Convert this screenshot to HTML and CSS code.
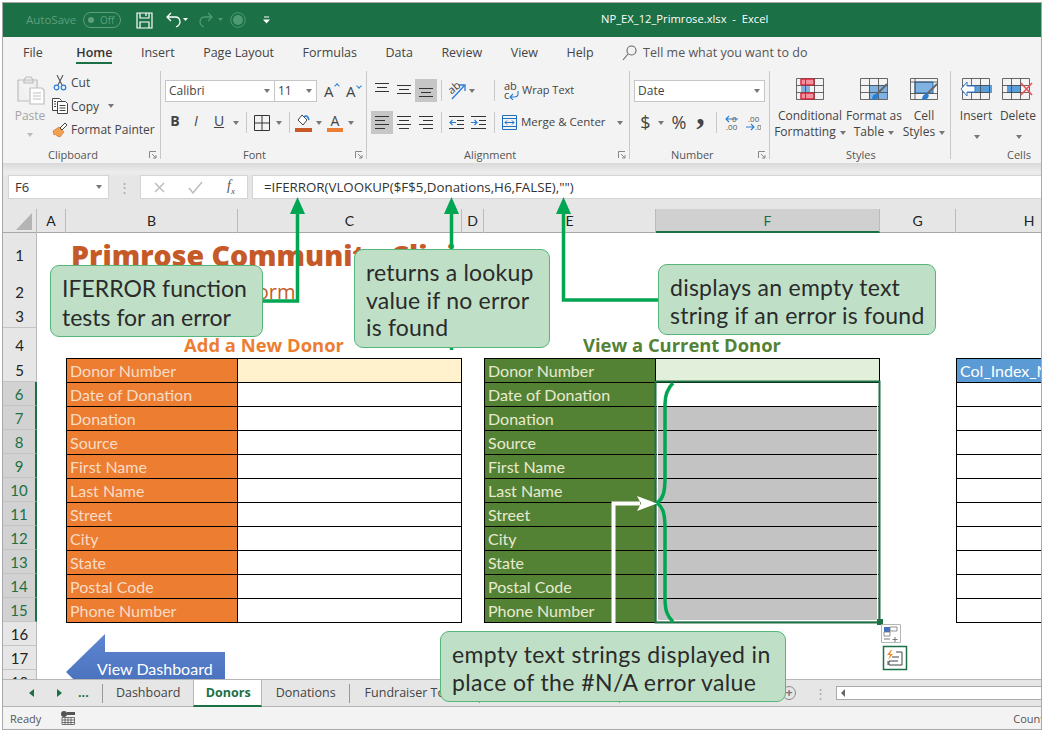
FILE: index.html
```html
<!DOCTYPE html>
<html>
    <head>
        <title>NP_EX_12_Primrose.xlsx - Excel</title>
        <meta charset="UTF-8">
        <link rel="stylesheet" href="styles.css">
    </head>
    <body>
        <div id="window">
            <div id="titlebar">
                <div id="qat">
                    <span id="autosave">AutoSave</span>
                    <span id="toggle"><i></i>Off</span>
                    <svg class="qat_save" width="17" height="17" viewBox="0 0 17 17" fill="none" stroke="#fff" stroke-width="1.2"><path d="M1 1h15v15H1zM4 1v5h9V1M4 16v-6h9v6M10 1v3"/></svg>
                    <svg class="qat_undo" width="22" height="16" viewBox="0 0 22 16" fill="none"><path d="M5 1L1 5l4 4M1 5h8c4 0 5 2 5 5s-2 4-4 5" stroke="#fff" stroke-width="1.3"/><path d="M17 6h5l-2.5 3z" fill="#fff"/></svg>
                    <svg class="qat_redo" width="26" height="16" viewBox="0 0 26 16" fill="none"><path d="M10 1l4 4-4 4M14 5H7c-4 0-5 2-5 5s2 4 4 5" stroke="#4e9b72" stroke-width="1.3"/><path d="M20 6h5l-2.5 3z" fill="#4e9b72"/></svg>
                    <svg class="qat_touch" width="16" height="16" viewBox="0 0 16 16"><circle cx="8" cy="8" r="7.3" fill="none" stroke="#4e9b72"/><circle cx="8" cy="8" r="5" fill="#4e9b72"/></svg>
                    <svg class="qat_more" width="7" height="8" viewBox="0 0 7 8"><path d="M1 1h5" stroke="#fff"/><path d="M0 3.500h7L3.500 7.500z" fill="#fff"/></svg>
                </div>
                <div id="doc_title">NP_EX_12_Primrose.xlsx &nbsp;-&nbsp; Excel</div>
            </div>

            <div id="tabs">
                <span>File</span>
                <span class="tab_active">Home</span>
                <span>Insert</span>
                <span>Page Layout</span>
                <span>Formulas</span>
                <span>Data</span>
                <span>Review</span>
                <span>View</span>
                <span>Help</span>
                <span class="tell_me">
                    <svg width="15" height="16" viewBox="0 0 15 16" fill="none" stroke="#666" stroke-width="1.100"><circle cx="9.500" cy="5.500" r="4.500"/><path d="M6 9l-5 6"/></svg>
                    Tell me what you want to do
                </span>
            </div>

            <div id="ribbon">
                <div class="group g_clip">
                    <div class="group_body clip_body">
                        <div class="paste">
                            <svg width="30" height="30" viewBox="0 0 30 30" fill="none" stroke="#bdbdbd" stroke-width="1.200"><path d="M3 5h6l2-3h5l2 3h4v8M3 5v21h11" fill="#f0f0f0"/><path d="M9 5h9v3H9z" fill="#e6e6e6"/><path d="M15 13h12l2 2v14H15z" fill="#fff"/><path d="M18 18h8M18 21h8M18 24h8"/></svg>
                            <span class="paste_text">Paste</span>
                            <i class="caret faded"></i>
                        </div>
                        <div class="clip_col">
                            <div class="clip_row">
                                <svg width="16" height="16" viewBox="0 0 16 16" fill="none"><path d="M5 0l5 10M11 0L6 10" stroke="#555" stroke-width="1.100"/><circle cx="4.500" cy="12.500" r="2.300" stroke="#2b7cd3" stroke-width="1.200"/><circle cx="11.500" cy="12.500" r="2.300" stroke="#2b7cd3" stroke-width="1.200"/></svg>
                                <span>Cut</span>
                            </div>
                            <div class="clip_row">
                                <svg width="16" height="16" viewBox="0 0 16 16" fill="#fff" stroke="#444"><path d="M.5.500h7l2 2v10h-9z"/><path d="M5.500 3.500h8l2 2v10h-10z"/><path d="M7.500 7.500h6M7.500 10h6M7.500 12.500h6M2 3.500h2M2 6h2M2 8.500h2" fill="none"/></svg>
                                <span>Copy</span>
                                <i class="caret copy_caret"></i>
                            </div>
                            <div class="clip_row">
                                <svg width="16" height="16" viewBox="0 0 16 16"><path d="M1 9l6-4 5 5-4 5-3-1-1-2-2 1z" fill="#f0a050" stroke="#d06a20" stroke-width=".6"/><path d="M8 6l5-5 2 2-5 5z" fill="#fff" stroke="#444"/></svg>
                                <span>Format Painter</span>
                            </div>
                        </div>
                    </div>
                    <div class="group_label label_clip"><span>Clipboard</span><svg class="launch" width="8" height="8" viewBox="0 0 8 8" fill="none" stroke="#888"><path d="M.5 7V.5H7M3 3l4 4M7 4v3H4"/></svg></div>
                </div>

                <div class="group g_font">
                    <div class="group_body tools_body">
                        <div class="tool_row first_row">
                            <div class="select font_name"><span>Calibri</span><i class="caret"></i></div>
                            <div class="select font_size"><span>11</span><i class="caret"></i></div>
                            <span class="grow_a">A<i class="up_mark"></i></span>
                            <span class="grow_a">A<i class="down_mark"></i></span>
                        </div>
                        <div class="tool_row">
                            <span class="t w20 bold">B</span>
                            <span class="t w22 ital">I</span>
                            <span class="t w24 under">U</span>
                            <span class="t w10"><i class="caret"></i></span>
                            <span class="t w10"><i class="sep"></i></span>
                            <span class="t w21">
                                <svg width="16" height="16" viewBox="0 0 16 16" fill="none" stroke="#333"><path d="M.5.500h15v15H.5zM8 .5v15M.5 8h15"/></svg>
                            </span>
                            <span class="t w13"><i class="caret"></i></span>
                            <span class="t w8"><i class="sep"></i></span>
                            <span class="t w20">
                                <svg width="17" height="18" viewBox="0 0 17 18"><path d="M7 1l5 5-4 5-5-5z" fill="#fff" stroke="#444"/><path d="M9 3c2-2 4-1 5 3" fill="none" stroke="#2b7cd3" stroke-width="1.500"/><path d="M0 14h17v4H0z" fill="#c55a28"/></svg>
                            </span>
                            <span class="t w11"><i class="caret"></i></span>
                            <span class="t w22 font_color">A</span>
                            <span class="t w10"><i class="caret"></i></span>
                        </div>
                    </div>
                    <div class="group_label label_font"><span>Font</span><svg class="launch" width="8" height="8" viewBox="0 0 8 8" fill="none" stroke="#888"><path d="M.5 7V.5H7M3 3l4 4M7 4v3H4"/></svg></div>
                </div>

                <div class="group g_align">
                    <div class="group_body tools_body">
                        <div class="tool_row first_row">
                            <span class="t w22"><svg width="14" height="23" viewBox="0 0 14 23" stroke="#333"><path d="M0 4.500h14M2 8.500h10M0 12.500h14"/></svg></span>
                            <span class="t w22"><svg width="14" height="23" viewBox="0 0 14 23" stroke="#333"><path d="M0 6.500h14M2 10.500h10M0 14.500h14"/></svg></span>
                            <span class="t w22 on"><svg width="14" height="23" viewBox="0 0 14 23" stroke="#333"><path d="M0 9.500h14M2 13.500h10M0 17.500h14"/></svg></span>
                            <span class="t w8"><i class="sep"></i></span>
                            <span class="t w44 orient">
                                <svg width="17" height="20" viewBox="0 0 17 20" fill="none"><text x="0" y="11" transform="rotate(-40 5 9)" class="svg_small">ab</text><path d="M3 18L15 5M10 4h6v6" stroke="#2b7cd3" stroke-width="1.300"/></svg>
                                <i class="caret"></i>
                            </span>
                            <span class="t w10"><i class="sep"></i></span>
                            <span class="wrap_text">
                                <svg width="15" height="18" viewBox="0 0 15 18" fill="none"><text x="0" y="8" class="svg_small">ab</text><text x="0" y="17" class="svg_small">c</text><path d="M14 9v3c0 2-2 3-4 3H6M9 12l-3 3 3 3" stroke="#2b7cd3" stroke-width="1.100"/></svg>
                                <span>Wrap Text</span>
                            </span>
                        </div>
                        <div class="tool_row">
                            <span class="t w22 on"><svg width="14" height="23" viewBox="0 0 14 23" stroke="#333"><path d="M0 5.500h14M0 9.500h10M0 13.500h14M0 17.500h10"/></svg></span>
                            <span class="t w22"><svg width="14" height="23" viewBox="0 0 14 23" stroke="#333"><path d="M0 5.500h14M2 9.500h10M0 13.500h14M2 17.500h10"/></svg></span>
                            <span class="t w22"><svg width="14" height="23" viewBox="0 0 14 23" stroke="#333"><path d="M0 5.500h14M4 9.500h10M0 13.500h14M4 17.500h10"/></svg></span>
                            <span class="t w8"><i class="sep"></i></span>
                            <span class="t w22"><svg width="15" height="23" viewBox="0 0 15 23" fill="none"><path d="M0 5.500h15M8 9.500h7M8 13.500h7M0 17.500h15" stroke="#333"/><path d="M7 11.500H1M3.500 9l-2.500 2.500L3.500 14" stroke="#2b7cd3" stroke-width="1.200"/></svg></span>
                            <span class="t w22"><svg width="15" height="23" viewBox="0 0 15 23" fill="none"><path d="M0 5.500h15M8 9.500h7M8 13.500h7M0 17.500h15" stroke="#333"/><path d="M0 11.500h6M3.500 9L6 11.500 3.500 14" stroke="#2b7cd3" stroke-width="1.200"/></svg></span>
                            <span class="t w10"><i class="sep"></i></span>
                            <span class="merge">
                                <svg width="15" height="15" viewBox="0 0 15 15" fill="none"><path d="M.5.500h14v14H.5z" stroke="#1f6fbf"/><path d="M.5 3.500h14M.5 11.500h14" stroke="#1f6fbf"/><path d="M3 7.500h9M5 5.500l-2 2 2 2M10 5.500l2 2-2 2" stroke="#1f6fbf"/></svg>
                                <span>Merge &amp; Center</span>
                                <i class="caret merge_caret"></i>
                            </span>
                        </div>
                    </div>
                    <div class="group_label label_align"><span>Alignment</span><svg class="launch" width="8" height="8" viewBox="0 0 8 8" fill="none" stroke="#888"><path d="M.5 7V.5H7M3 3l4 4M7 4v3H4"/></svg></div>
                </div>

                <div class="group g_number">
                    <div class="group_body tools_body">
                        <div class="tool_row first_row">
                            <div class="select num_format"><span>Date</span><i class="caret"></i></div>
                        </div>
                        <div class="tool_row">
                            <span class="t w23 num_sym">$</span>
                            <span class="t w8"><i class="caret"></i></span>
                            <span class="t w28 num_sym">%</span>
                            <span class="t w15 comma">,</span>
                            <span class="t w16"><i class="sep"></i></span>
                            <svg class="dec_icon" width="15" height="16" viewBox="0 0 15 16" fill="none"><path d="M14 4H2M5 1L2 4l3 3" stroke="#2b7cd3" stroke-width="1.100"/><text x="8" y="7" class="svg_tiny">0</text><text x="2" y="15" class="svg_tiny">.00</text></svg>
                            <svg class="dec_icon inc" width="15" height="16" viewBox="0 0 15 16" fill="none"><text x="2" y="7" class="svg_tiny">.00</text><path d="M0 12h8M5 9l3 3-3 3" stroke="#2b7cd3" stroke-width="1.100"/><text x="9" y="15" class="svg_tiny">.0</text></svg>
                        </div>
                    </div>
                    <div class="group_label label_number"><span>Number</span><svg class="launch" width="8" height="8" viewBox="0 0 8 8" fill="none" stroke="#888"><path d="M.5 7V.5H7M3 3l4 4M7 4v3H4"/></svg></div>
                </div>

                <div class="group g_styles">
                    <div class="group_body big_body styles_body">
                        <div class="big w72">
                            <svg width="28" height="22" viewBox="0 0 28 22"><path d="M5 1h13v6H5zM5 15h13v6H5z" fill="#f4919f" stroke="#e0243a"/><path d="M5 7h9v8H5z" fill="#7fb2e0"/><path d="M.5.500h27v21H.5zM9.500.5v21M18.500.5v21M.5 7.500h27M.5 14.500h27" fill="none" stroke="#444" stroke-width=".8"/><path d="M5 1h13M5 7h13M5 15h13M5 21h13M5 1v6M5 15v6M18 1v6M18 15v6" fill="none" stroke="#e0243a"/></svg>
                            <span>Conditional</span>
                            <span>Formatting <i class="caret"></i></span>
                        </div>
                        <div class="big w56">
                            <svg width="28" height="22" viewBox="0 0 28 22"><path d="M9 7h18v14H9z" fill="#7fb2e0"/><path d="M.5.500h27v21H.5zM9.500.5v21M18.500.5v21M.5 7.500h27M.5 14.500h27" fill="none" stroke="#444" stroke-width=".8"/><path d="M27 6L17 16" stroke="#666" stroke-width="2"/><path d="M12 22c0-5 3-7 6-6 2 2 0 6-6 6z" fill="#2b7cd3"/></svg>
                            <span>Format as</span>
                            <span>Table <i class="caret"></i></span>
                        </div>
                        <div class="big w44">
                            <svg width="28" height="22" viewBox="0 0 28 22"><path d="M5 4h18v11H5z" fill="#7fb2e0" stroke="#1f6fbf"/><path d="M.5.500h27v21H.5zM5 .5v21M.5 4h27M.5 15.500h27" fill="none" stroke="#444" stroke-width=".8"/><path d="M27 6L17 16" stroke="#666" stroke-width="2"/><path d="M12 22c0-5 3-7 6-6 2 2 0 6-6 6z" fill="#2b7cd3"/></svg>
                            <span>Cell</span>
                            <span>Styles <i class="caret"></i></span>
                        </div>
                    </div>
                    <div class="group_label label_styles"><span>Styles</span></div>
                </div>

                <div class="group g_cells">
                    <div class="group_body big_body cells_body">
                        <div class="big w42">
                            <svg width="32" height="22" viewBox="0 0 32 22"><path d="M11 7h21v8H11z" fill="#5a9fdc"/><path d="M2.500.5h27v21h-27zM11.500.5v21M20.500.5v21M2.500 7.500h27M2.500 14.500h27" fill="none" stroke="#444" stroke-width=".8"/><path d="M7 4l-6 7 6 7v-4h8V8H7z" fill="#fff" stroke="#2b7cd3"/></svg>
                            <span>Insert</span>
                            <i class="caret big_caret"></i>
                        </div>
                        <div class="big w42">
                            <svg width="32" height="22" viewBox="0 0 32 22"><path d="M5 7h14v8H5z" fill="#5a9fdc"/><path d="M.5.500h27v21H.5zM9.500.5v21M18.500.5v21M.5 7.500h27M.5 14.500h27" fill="none" stroke="#444" stroke-width=".8"/><path d="M19 5l11 12M30 5L19 17" stroke="#f0505a" stroke-width="1.600"/></svg>
                            <span>Delete</span>
                            <i class="caret big_caret"></i>
                        </div>
                    </div>
                    <div class="group_label label_cells"><span>Cells</span></div>
                </div>
            </div>

            <div id="formula_bar">
                <div class="name_box"><span>F6</span><i class="caret"></i></div>
                <div class="bar_dots">&#8942;</div>
                <div class="fx_box">
                    <svg width="13" height="13" viewBox="0 0 13 13" stroke="#bdbdbd" stroke-width="1.500"><path d="M2 2l9 9M11 2l-9 9"/></svg>
                    <svg width="15" height="13" viewBox="0 0 15 13" fill="none" stroke="#bdbdbd" stroke-width="1.500"><path d="M1 7l4 5 9-11"/></svg>
                    <span class="fx">f<sub>x</sub></span>
                </div>
                <div class="formula_input">=IFERROR(VLOOKUP($F$5,Donations,H6,FALSE),"")</div>
            </div>

            <div id="col_heads" class="grid_row">
                <div class="corner"><svg width="16" height="17" viewBox="0 0 16 17"><path d="M16 0v17H0z" fill="#b4b4b4"/></svg></div>
                <div class="col_head">A</div>
                <div class="col_head">B</div>
                <div class="col_head">C</div>
                <div class="col_head">D</div>
                <div class="col_head">E</div>
                <div class="col_head col_sel">F</div>
                <div class="col_head">G</div>
                <div class="col_head">H</div>
            </div>

            <div id="sheet">
                <div class="grid_row r41">
                    <div class="row_head">1</div>
                    <div class="c_b sheet_title">Primrose Community Clinic</div>
                </div>
                <div class="grid_row r30">
                    <div class="row_head">2</div>
                    <div class="c_b sheet_sub">Donation Entry Form</div>
                </div>
                <div class="grid_row">
                    <div class="row_head">3</div>
                </div>
                <div class="grid_row r30">
                    <div class="row_head">4</div>
                    <div class="c_bc form_head orange_text">Add a New Donor</div>
                    <div class="c_ef form_head green_text">View a Current Donor</div>
                </div>
                <div class="grid_row">
                    <div class="row_head">5</div>
                    <div class="c_b cell orange">Donor Number</div>
                    <div class="c_c cell yellow"></div>
                    <div class="c_e cell green">Donor Number</div>
                    <div class="c_f cell pale"></div>
                    <div class="c_h cell blue">Col_Index_Num</div>
                </div>
                <div class="grid_row">
                    <div class="row_head head_sel">6</div>
                    <div class="c_b cell orange">Date of Donation</div>
                    <div class="c_c cell"></div>
                    <div class="c_e cell green">Date of Donation</div>
                    <div class="c_f cell"></div>
                    <div class="c_h cell"></div>
                </div>
                <div class="grid_row">
                    <div class="row_head head_sel">7</div>
                    <div class="c_b cell orange">Donation</div>
                    <div class="c_c cell"></div>
                    <div class="c_e cell green">Donation</div>
                    <div class="c_f cell grey"></div>
                    <div class="c_h cell"></div>
                </div>
                <div class="grid_row">
                    <div class="row_head head_sel">8</div>
                    <div class="c_b cell orange">Source</div>
                    <div class="c_c cell"></div>
                    <div class="c_e cell green">Source</div>
                    <div class="c_f cell grey"></div>
                    <div class="c_h cell"></div>
                </div>
                <div class="grid_row">
                    <div class="row_head head_sel">9</div>
                    <div class="c_b cell orange">First Name</div>
                    <div class="c_c cell"></div>
                    <div class="c_e cell green">First Name</div>
                    <div class="c_f cell grey"></div>
                    <div class="c_h cell"></div>
                </div>
                <div class="grid_row">
                    <div class="row_head head_sel">10</div>
                    <div class="c_b cell orange">Last Name</div>
                    <div class="c_c cell"></div>
                    <div class="c_e cell green">Last Name</div>
                    <div class="c_f cell grey"></div>
                    <div class="c_h cell"></div>
                </div>
                <div class="grid_row">
                    <div class="row_head head_sel">11</div>
                    <div class="c_b cell orange">Street</div>
                    <div class="c_c cell"></div>
                    <div class="c_e cell green">Street</div>
                    <div class="c_f cell grey"></div>
                    <div class="c_h cell"></div>
                </div>
                <div class="grid_row">
                    <div class="row_head head_sel">12</div>
                    <div class="c_b cell orange">City</div>
                    <div class="c_c cell"></div>
                    <div class="c_e cell green">City</div>
                    <div class="c_f cell grey"></div>
                    <div class="c_h cell"></div>
                </div>
                <div class="grid_row">
                    <div class="row_head head_sel">13</div>
                    <div class="c_b cell orange">State</div>
                    <div class="c_c cell"></div>
                    <div class="c_e cell green">State</div>
                    <div class="c_f cell grey"></div>
                    <div class="c_h cell"></div>
                </div>
                <div class="grid_row">
                    <div class="row_head head_sel">14</div>
                    <div class="c_b cell orange">Postal Code</div>
                    <div class="c_c cell"></div>
                    <div class="c_e cell green">Postal Code</div>
                    <div class="c_f cell grey"></div>
                    <div class="c_h cell"></div>
                </div>
                <div class="grid_row">
                    <div class="row_head head_sel">15</div>
                    <div class="c_b cell orange">Phone Number</div>
                    <div class="c_c cell"></div>
                    <div class="c_e cell green">Phone Number</div>
                    <div class="c_f cell grey"></div>
                    <div class="c_h cell"></div>
                </div>
                <div class="grid_row">
                    <div class="row_head">16</div>
                    <div class="c_bc table_end"></div>
                    <div class="c_ef table_end"></div>
                    <div class="c_h table_end"></div>
                </div>
                <div class="grid_row">
                    <div class="row_head">17</div>
                </div>
                <div class="grid_row">
                    <div class="row_head">18</div>
                </div>

                <svg class="dash_arrow" width="160" height="78" viewBox="0 0 160 78">
                    <defs>
                        <linearGradient id="dash_fill" x1="0" y1="0" x2="0" y2="1">
                            <stop offset="0" stop-color="#5f86cf"/>
                            <stop offset="1" stop-color="#3d67b5"/>
                        </linearGradient>
                    </defs>
                    <path d="M0 38L39 0V18H159V58H39V76z" fill="url(#dash_fill)"/>
                </svg>
                <div class="shape_text">View Dashboard</div>
            </div>

            <div id="sheet_tabs">
                <div class="tab_nav">
                    <i class="nav_left"></i>
                    <i class="nav_right"></i>
                    <b>...</b>
                </div>
                <div class="sheet_tab tab_dash">Dashboard</div>
                <div class="sheet_tab tab_donors">Donors</div>
                <div class="sheet_tab tab_donations">Donations</div>
                <div class="sheet_tab tab_fund">Fundraiser Totals</div>
                <div class="sheet_tab tab_blank"></div>
                <div class="sheet_tab tab_blank2"></div>
                <div class="tab_add">+</div>
                <div class="tab_dots">&#8942;</div>
                <div class="scroll_box"><i></i></div>
            </div>

            <div id="status">
                <span>Ready</span>
                <svg width="14" height="14" viewBox="0 0 14 14"><circle cx="3" cy="3" r="3" fill="#555"/><path d="M6 1h8v3H6z" fill="#555"/><path d="M1 6.500h12.500v7H1zM1 9h12.500M1 11.500h12.500M4 6.500v7M7 6.500v7M10 6.500v7" fill="none" stroke="#555" stroke-width=".8"/></svg>
                <span class="status_count">Count: 11</span>
            </div>
        </div>

        <!-- things that float over the sheet -->
        <svg class="overlay" width="1045" height="733" viewBox="0 0 1045 733" fill="none">
            <path d="M657.500 383.500H877.500V620.500H657.500z" stroke="#fff"/>
            <path d="M655.500 381.500H879.500V622.500H655.500z" stroke="#1e7145" stroke-width="2"/>
            <path d="M877 619h6v6h-6z" fill="#1e7145"/>
            <g stroke="#00a651" stroke-width="3.500">
                <path d="M263 301H297.500V210"/>
                <path d="M451.500 250V210M451.500 347v3"/>
                <path d="M658 300H563.500V210"/>
                <path d="M673 383C667 389 665 395 665 404V478C665 492 663 499 657 503C663 507 665 514 665 528V598C665 610 667 616 673 622"/>
            </g>
            <g fill="#00a651">
                <path d="M297.500 197L305 214H290z"/>
                <path d="M451.500 197L459 214H444z"/>
                <path d="M563.500 197L571 214H556z"/>
            </g>
            <path d="M613.500 631V503.500H640" stroke="#fff" stroke-width="4"/>
            <path d="M657 503.500L637 496L641 503.500L637 511z" fill="#fff"/>
            <path d="M881.500 624.500h19v18h-19z" fill="#fff" stroke="#b5b5b5"/>
            <path d="M884 627h6v5h-6z" fill="#4570bd"/>
            <path d="M890 627h7v4h-7zM884 632h6v4h-6z" stroke="#777" stroke-width=".8"/>
            <path d="M895 637v5M892.500 639.500h5M884 639h6" stroke="#777"/>
            <path d="M883.500 646.500h23v23h-23z" fill="#fff" stroke="#1e7145" stroke-width="1.500"/>
            <path d="M891 650l-4 5h3l-2 5 5-6h-3l2-4z" fill="#ee8a2a"/>
            <path d="M896 652h6v13h-13v-4h9M888 661v4M892 657h7" stroke="#444"/>
        </svg>

        <div class="callout call_iferror">IFERROR function<br>tests for an error</div>
        <div class="callout call_lookup">returns a lookup<br>value if no error<br>is found</div>
        <div class="callout call_empty">displays an empty text<br>string if an error is found</div>
        <div class="callout call_strings">empty text strings displayed in<br>place of the #N/A error value</div>
    </body>
</html>
```

FILE: styles.css
```css
html, body {
    margin: 0;
    background-color: #fff;
}
body {
    position: relative;
    width: 1045px;
    height: 733px;
    overflow: hidden;
    font-family: "Open Sans", sans-serif;
    font-size: 12px;
    color: #444;
}
i {
    font-style: normal;
}
#window {
    box-sizing: border-box;
    width: 1040px;
    height: 728px;
    margin: 2px 0 0 2px;
    border: 1px solid #a8a8a8;
    display: flex;
    flex-direction: column;
    overflow: hidden;
}

/* title bar */
#titlebar {
    height: 34px;
    flex: none;
    background-color: #1b7045;
    display: flex;
    align-items: center;
}
#qat {
    width: 598px;
    display: flex;
    align-items: center;
    padding-left: 23px;
    box-sizing: border-box;
}
#autosave {
    color: #5f9f7e;
    font-size: 11.500px;
    width: 57px;
    padding-bottom: 2px;
}
#toggle {
    box-sizing: border-box;
    width: 38px;
    height: 16px;
    border: 1px solid #5f9f7e;
    border-radius: 8px;
    color: #5f9f7e;
    font-size: 10px;
    line-height: 14px;
    display: flex;
    align-items: center;
    gap: 6px;
    padding-left: 4px;
}
#toggle i {
    width: 6px;
    height: 6px;
    border-radius: 50%;
    background-color: #5f9f7e;
}
.qat_save {
    margin-left: 15px;
}
.qat_undo {
    margin-left: 13px;
}
.qat_redo {
    margin-left: 10px;
}
.qat_touch {
    margin-left: 6px;
}
.qat_more {
    margin-left: 17px;
}
#doc_title {
    color: #fff;
    font-size: 11.200px;
    white-space: nowrap;
    padding-bottom: 3px;
}

/* ribbon tabs */
#tabs {
    height: 33px;
    flex: none;
    box-sizing: border-box;
    padding: 0 0 2px 20px;
    background-color: #f3f3f3;
    display: flex;
    align-items: center;
    gap: 28.500px;
    font-size: 12.500px;
}
.tab_active {
    position: relative;
    margin-left: 5px;
    font-weight: 600;
    color: #333;
}
.tab_active::after {
    content: "";
    position: absolute;
    left: 0;
    right: 0;
    bottom: -3px;
    height: 2px;
    background-color: #1b7045;
}
.tell_me {
    display: flex;
    align-items: center;
    gap: 6px;
    color: #555;
}

/* ribbon */
#ribbon {
    height: 93px;
    flex: none;
    background-color: #f3f3f3;
    display: flex;
    align-items: flex-start;
    padding-top: 1px;
    box-sizing: border-box;
}
.group {
    box-sizing: border-box;
    height: 88px;
    flex: none;
    border-right: 1px solid #c8c8c8;
}
.g_clip { width: 158px; }
.g_font { width: 206px; }
.g_align { width: 263px; }
.g_number { width: 140px; }
.g_styles { width: 181px; }
.g_cells { width: 90px; border-right: none; }
.group_body {
    height: 77px;
    box-sizing: border-box;
}
.group_label {
    height: 11px;
    line-height: 14px;
    display: flex;
    align-items: flex-start;
    font-size: 11px;
    color: #555;
    padding-right: 3px;
}
.launch {
    margin: 3px 0 0 auto;
}
.label_clip span { margin-left: 45px; }
.label_font span { margin-left: 82px; }
.label_align span { margin-left: 97px; }
.label_number span { margin-left: 41px; }
.label_styles span { margin-left: 76px; }
.label_cells span { margin-left: 56px; }

.caret {
    display: inline-block;
    width: 0;
    height: 0;
    border-left: 3.500px solid transparent;
    border-right: 3.500px solid transparent;
    border-top: 4px solid #777;
}
.caret.faded {
    border-top-color: #bbb;
}

/* clipboard */
.clip_body {
    display: flex;
    padding-left: 12px;
}
.paste {
    width: 30px;
    display: flex;
    flex-direction: column;
    align-items: center;
    padding-top: 4px;
}
.paste_text {
    color: #a5a5a5;
    line-height: 16px;
    margin-top: 3px;
}
.paste .caret {
    margin-top: 9px;
}
.clip_col {
    margin-left: 7px;
}
.clip_row {
    height: 23.500px;
    display: flex;
    align-items: center;
    gap: 3px;
}
.copy_caret {
    margin-left: 6px;
}

/* small tools */
.tools_body {
    padding: 8px 0 0 4px;
}
.tool_row {
    height: 23px;
    display: flex;
    align-items: center;
}
.first_row {
    margin-bottom: 9px;
}
.t {
    height: 23px;
    display: flex;
    flex: none;
    align-items: center;
    justify-content: center;
}
.w8 { width: 8px; }
.w10 { width: 10px; }
.w11 { width: 11px; }
.w13 { width: 13px; }
.w15 { width: 15px; }
.w16 { width: 16px; }
.w20 { width: 20px; }
.w21 { width: 21px; }
.w22 { width: 22px; }
.w23 { width: 23px; }
.w24 { width: 24px; }
.w28 { width: 28px; }
.w44 { width: 44px; }
.w42 { width: 42px; }
.w56 { width: 56px; }
.w72 { width: 72px; }
.on {
    background-color: #c6c6c6;
}
.sep {
    width: 1px;
    height: 21px;
    background-color: #c8c8c8;
}
.select {
    box-sizing: border-box;
    height: 22px;
    background-color: #fff;
    border: 1px solid #c6c6c6;
    display: flex;
    align-items: center;
    justify-content: space-between;
    padding: 0 4px 0 3px;
    color: #444;
}
.font_name { width: 110px; }
.font_size { width: 43px; margin-left: -1px; }
.num_format { width: 131px; }
.grow_a {
    font-size: 15px;
    margin-left: 7px;
    display: flex;
    width: 15px;
}
.up_mark, .down_mark {
    width: 3px;
    height: 3px;
    margin: 3px 0 0 1px;
    transform: rotate(45deg);
}
.up_mark {
    border-left: 1px solid #2b7cd3;
    border-top: 1px solid #2b7cd3;
}
.down_mark {
    border-right: 1px solid #2b7cd3;
    border-bottom: 1px solid #2b7cd3;
}
.bold {
    font-weight: 700;
    font-size: 14px;
    padding-bottom: 4px;
    box-sizing: border-box;
}
.ital {
    font-style: italic;
    font-size: 14px;
    padding-bottom: 4px;
    box-sizing: border-box;
}
.under {
    text-decoration: underline;
    font-size: 14px;
    padding-bottom: 4px;
    box-sizing: border-box;
}
.font_color {
    font-size: 14px;
    line-height: 16px;
    height: 18px;
    border-bottom: 4px solid #ed7d31;
    box-sizing: border-box;
    width: 16px;
    margin: 0 3px;
}
.orient {
    justify-content: flex-start;
    gap: 3px;
    padding-left: 4px;
    box-sizing: border-box;
}
.svg_small {
    font-family: "Open Sans", sans-serif;
    font-size: 11px;
    fill: #444;
}
.svg_tiny {
    font-family: "Open Sans", sans-serif;
    font-size: 8px;
    fill: #555;
}
.wrap_text, .merge {
    display: flex;
    align-items: center;
    gap: 3px;
    margin-left: 5px;
    font-size: 11px;
    white-space: nowrap;
}
.wrap_text span, .merge span {
    padding-bottom: 2px;
}
.merge {
    margin-left: 3px;
    gap: 4px;
    font-size: 11.500px;
}
.merge_caret {
    margin-left: 7px;
}
.num_sym {
    font-size: 18px;
    padding-bottom: 2px;
    box-sizing: border-box;
}
.comma {
    font-family: "Liberation Serif", serif;
    font-size: 34px;
    font-weight: 700;
    line-height: 14px;
    padding-bottom: 20px;
    box-sizing: border-box;
}
.dec_icon {
    flex: none;
}
.dec_icon.inc {
    margin-left: 7px;
}

/* big buttons */
.big_body {
    display: flex;
    padding-top: 7px;
}
.styles_body {
    padding-left: 4px;
}
.cells_body {
    padding-left: 4px;
}
.big {
    display: flex;
    flex-direction: column;
    align-items: center;
    line-height: 16px;
    flex: none;
    white-space: nowrap;
}
.big svg {
    margin-bottom: 8px;
}
.big .caret {
    vertical-align: middle;
    margin-left: 1px;
}
.big_caret {
    margin-top: 11px;
}

/* formula bar */
#formula_bar {
    height: 46px;
    flex: none;
    box-sizing: border-box;
    padding: 12px 0 10px 5px;
    background: linear-gradient(#d9d9d9, #ededed 9px, #e6e6e6 14px);
    display: flex;
}
.name_box {
    box-sizing: border-box;
    width: 101px;
    background-color: #fff;
    border: 1px solid #d4d4d4;
    display: flex;
    align-items: center;
    justify-content: space-between;
    padding: 0 6px;
    font-size: 13px;
    color: #333;
}
.bar_dots {
    width: 31px;
    text-align: center;
    line-height: 24px;
    color: #aaa;
    font-size: 13px;
}
.fx_box {
    box-sizing: border-box;
    width: 108px;
    background-color: #fff;
    border: 1px solid #d4d4d4;
    display: flex;
    align-items: center;
    gap: 22px;
    padding-left: 12px;
}
.fx {
    font-family: "Liberation Serif", serif;
    font-style: italic;
    font-size: 14px;
    margin-left: 2px;
    color: #555;
}
.fx sub {
    font-size: 9px;
}
.formula_input {
    flex: 1;
    margin-left: 4px;
    background-color: #fff;
    border: 1px solid #d4d4d4;
    border-right: none;
    line-height: 22px;
    padding-left: 11px;
    font-size: 13.300px;
    color: #333;
    white-space: nowrap;
}

/* sheet grid */
.grid_row {
    display: grid;
    grid-template-columns: 34px 29px 172px 224px 22px 172px 224px 76px 147px;
    grid-template-rows: 1fr;
    height: 24px;
}
.r41 { height: 41px; }
.r30 { height: 30px; }
#col_heads {
    flex: none;
    background-color: #e6e6e6;
    border-bottom: 1px solid #a8a8a8;
    box-sizing: border-box;
}
.corner {
    display: flex;
    align-items: flex-end;
    justify-content: flex-end;
    padding: 0 4px 3px 0;
    border-right: 1px solid #bbb;
}
.col_head {
    box-sizing: border-box;
    border-right: 1px solid #bbb;
    text-align: center;
    line-height: 23px;
    font-family: "Lato", sans-serif;
    font-size: 14px;
    color: #222;
}
.col_sel {
    background-color: #d0d0d0;
    color: #1b7045;
    border-bottom: 2px solid #1b7045;
    height: 24px;
}
#sheet {
    position: relative;
    height: 446px;
    flex: none;
    overflow: hidden;
    background-color: #fff;
}
.row_head {
    box-sizing: border-box;
    background-color: #e6e6e6;
    border-right: 1px solid #bbb;
    border-bottom: 1px solid #c4c4c4;
    display: flex;
    align-items: center;
    justify-content: center;
    font-family: "Lato", sans-serif;
    font-size: 15px;
    color: #222;
}
.head_sel {
    background-color: #d2d2d2;
    color: #1b7045;
    border-right: 2px solid #1b7045;
}
.c_b { grid-column: 3; }
.c_c { grid-column: 4; }
.c_e { grid-column: 6; }
.c_f { grid-column: 7; }
.c_h { grid-column: 9; }
.c_bc { grid-column: 3 / span 2; }
.c_ef { grid-column: 6 / span 2; }
.sheet_title {
    white-space: nowrap;
    font-family: "Open Sans", sans-serif;
    font-weight: 800;
    font-size: 28.500px;
    line-height: 45px;
    color: #c55a28;
    padding-left: 5px;
}
.sheet_sub {
    white-space: nowrap;
    font-family: "Open Sans", sans-serif;
    font-size: 20px;
    line-height: 36px;
    color: #c55a28;
    padding-left: 35px;
}
.form_head {
    text-align: center;
    font-family: "Open Sans", sans-serif;
    font-weight: 700;
    font-size: 18.400px;
    line-height: 34px;
}
.orange_text { color: #ed7d31; }
.green_text { color: #548235; }
.cell {
    box-sizing: border-box;
    border-top: 1px solid #000;
    border-right: 1px solid #000;
    padding-left: 3px;
    font-family: "Lato", sans-serif;
    font-size: 16px;
    line-height: 23px;
    white-space: nowrap;
    overflow: hidden;
}
.c_b.cell, .c_e.cell, .c_h.cell {
    border-left: 1px solid #000;
}
.c_h.cell {
    border-right: none;
}
.orange {
    background-color: #ed7d31;
    color: #f8dcc6;
}
.green {
    background-color: #548235;
    color: #e8ead0;
}
.yellow { background-color: #fff2cc; }
.pale { background-color: #e2efda; }
.grey { background-color: #c3c3c3; }
.blue {
    background-color: #5b9bd5;
    color: #fff;
}
.table_end {
    border-top: 1px solid #000;
}

/* View Dashboard shape, cut off by the tab bar */
.dash_arrow {
    position: absolute;
    left: 63px;
    top: 401px;
}
.shape_text {
    position: absolute;
    left: 94px;
    top: 427px;
    font-family: "Lato", sans-serif;
    font-size: 16px;
    line-height: 18px;
    color: #fff;
}

/* sheet tabs */
#sheet_tabs {
    box-sizing: border-box;
    height: 28px;
    flex: none;
    background-color: #e6e6e6;
    border-top: 1px solid #b5b5b5;
    border-bottom: 1px solid #b5b5b5;
    display: flex;
    align-items: center;
    font-size: 12.500px;
}
.tab_nav {
    box-sizing: border-box;
    width: 100px;
    height: 19px;
    display: flex;
    align-items: center;
    padding-left: 26px;
    border-right: 1px solid #999;
    color: #1b7045;
}
.tab_nav b {
    margin-left: 16px;
    line-height: 12px;
}
.nav_left, .nav_right {
    width: 0;
    height: 0;
    border-top: 4px solid transparent;
    border-bottom: 4px solid transparent;
}
.nav_left {
    border-right: 5px solid #1b7045;
}
.nav_right {
    border-left: 5px solid #1b7045;
    margin-left: 23px;
}
.sheet_tab {
    box-sizing: border-box;
    height: 19px;
    line-height: 18px;
    padding-left: 13px;
    border-right: 1px solid #999;
    color: #444;
    white-space: nowrap;
    overflow: hidden;
}
.tab_dash { width: 90px; border-right: none; }
.tab_donors {
    width: 69px;
    height: 27px;
    line-height: 26px;
    padding-left: 12px;
    background-color: #fff;
    border-left: 1px solid #b5b5b5;
    border-right: 1px solid #b5b5b5;
    border-bottom: 2px solid #1b7045;
    font-weight: 700;
    color: #1b7045;
}
.tab_donations { width: 88px; padding-left: 14px; }
.tab_fund { width: 131px; padding-left: 15px; }
.tab_blank { width: 140px; }
.tab_blank2 { width: 162px; border-right: none; }
.tab_add {
    box-sizing: border-box;
    width: 14px;
    height: 14px;
    border: 1px solid #888;
    border-radius: 50%;
    text-align: center;
    line-height: 11px;
    font-weight: 700;
    color: #777;
    flex: none;
}
.tab_dots {
    width: 29px;
    margin-left: 10px;
    text-align: center;
    color: #aaa;
    flex: none;
}
.scroll_box {
    box-sizing: border-box;
    width: 205px;
    height: 14px;
    flex: none;
    background-color: #fff;
    border: 1px solid #aaa;
    border-right: none;
    margin-left: 1px;
    padding: 2px 0 0 4px;
}
.scroll_box i {
    display: block;
    width: 0;
    height: 0;
    border-top: 4px solid transparent;
    border-bottom: 4px solid transparent;
    border-right: 4px solid #666;
}

/* status bar */
#status {
    height: 22px;
    flex: none;
    box-sizing: border-box;
    background-color: #f3f3f3;
    display: flex;
    align-items: center;
    padding-left: 7px;
    font-size: 11px;
    color: #555;
    overflow: hidden;
    white-space: nowrap;
}
#status svg {
    margin-left: 20px;
    flex: none;
}
.status_count {
    margin-left: 938px;
    flex: none;
}

/* overlay */
.overlay {
    position: absolute;
    left: 0;
    top: 0;
}
.callout {
    position: absolute;
    box-sizing: border-box;
    background-color: #bfe0c7;
    border: 1.500px solid #55b57a;
    border-radius: 9px;
    font-family: "Lato", sans-serif;
    font-size: 23px;
    line-height: 27.500px;
    color: #2b2b2b;
    white-space: nowrap;
    padding: 9px 0 0 11px;
}
.call_iferror {
    left: 50px;
    top: 265px;
    width: 213px;
    height: 72px;
    line-height: 28.500px;
    padding-top: 8px;
}
.call_lookup {
    left: 354px;
    top: 249px;
    width: 196px;
    height: 99px;
    letter-spacing: .2px;
}
.call_empty {
    left: 658px;
    top: 264px;
    width: 278px;
    height: 71px;
    letter-spacing: .25px;
}
.call_strings {
    left: 440px;
    top: 631px;
    width: 346px;
    height: 71px;
    letter-spacing: .4px;
}
```
